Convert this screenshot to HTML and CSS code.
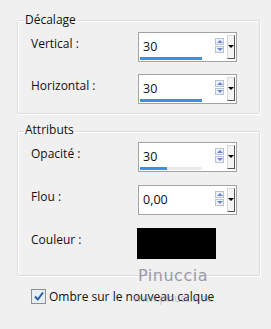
FILE: index.html
```html
<!DOCTYPE html>
<html>
<head>
<meta charset="utf-8">
<link rel="stylesheet" href="styles.css">
</head>
<body>
<div class="dialog">
  <fieldset class="group g1">
    <legend>Décalage</legend>
    <div class="row">
      <span class="label">Vertical :</span>
      <div class="spin">
        <div class="field"><span class="val">30</span><div class="track"><div class="fill" style="width:62px"></div></div></div>
        <div class="arrows"><span class="up"></span><span class="down"></span></div>
        <span class="drop"></span>
      </div>
    </div>
    <div class="row">
      <span class="label">Horizontal :</span>
      <div class="spin">
        <div class="field"><span class="val">30</span><div class="track"><div class="fill" style="width:62px"></div></div></div>
        <div class="arrows"><span class="up"></span><span class="down"></span></div>
        <span class="drop"></span>
      </div>
    </div>
  </fieldset>
  <fieldset class="group g2">
    <legend>Attributs</legend>
    <div class="row">
      <span class="label">Opacité :</span>
      <div class="spin">
        <div class="field"><span class="val">30</span><div class="track"><div class="fill" style="width:27px"></div></div></div>
        <div class="arrows"><span class="up"></span><span class="down"></span></div>
        <span class="drop"></span>
      </div>
    </div>
    <div class="row">
      <span class="label">Flou :</span>
      <div class="spin">
        <div class="field"><span class="val">0,00</span></div>
        <div class="arrows"><span class="up"></span><span class="down"></span></div>
        <span class="drop"></span>
      </div>
    </div>
    <div class="row color-row">
      <span class="label">Couleur :</span>
      <div class="swatch"></div>
    </div>
  </fieldset>
  <label class="check">
    <span class="box"><svg width="12" height="12" viewBox="0 0 12 12"><path d="M2 6.5 L4.8 9.5 L10 2.5" fill="none" stroke="#2a5aa8" stroke-width="2"/></svg></span>
    <span>Ombre sur le nouveau calque</span>
  </label>
  <div class="watermark">
    <span class="wm-big">Pinuccia</span>
    <span class="wm-small">www.pinuccia.eu</span>
  </div>
</div>
</body>
</html>
```

FILE: styles.css
```css
html, body {
  margin: 0;
  padding: 0;
  background: #f0f0f0;
}
body {
  font-family: "Open Sans", "Noto Sans", sans-serif;
  font-size: 12px;
  color: #111;
  width: 271px;
  height: 329px;
  overflow: hidden;
}
.dialog {
  position: relative;
  padding-top: 13px;
}
.group {
  margin: 0 0 0 17px;
  width: 243px;
  box-sizing: border-box;
  border: 1px solid #d8dde2;
  box-shadow: inset 1px 1px 0 #fff, 1px 1px 0 #fff;
  border-radius: 2px;
  padding: 0 0 0 13px;
}
.group legend {
  padding: 0 2px 0 1px;
  margin-left: -7px;
  line-height: 14px;
  height: 14px;
}
.g1 {
  height: 101px;
  padding-top: 5px;
}
.g2 {
  margin-top: 9px;
  height: 153px;
  padding-top: 3px;
}
.g2 legend {
  height: 16px;
  padding-bottom: 2px;
  box-sizing: border-box;
}
.row {
  display: flex;
  align-items: flex-start;
  height: 30px;
  margin-bottom: 12px;
}
.g2 .row { margin-bottom: 13px; }
.label {
  width: 107px;
  padding-top: 4px;
  line-height: 16px;
}
.spin {
  width: 99px;
  height: 30px;
  box-sizing: border-box;
  border: 1px solid #a3a3a3;
  background: #fff;
  display: flex;
  align-items: flex-start;
}
.field {
  position: relative;
  flex: 1;
  height: 28px;
}
.val {
  display: block;
  padding: 6px 0 0 4px;
  line-height: 16px;
  font-size: 12.5px;
}
.track {
  position: absolute;
  left: 1px;
  top: 24px;
  width: 62px;
  height: 3px;
  background: #eaeaea;
}
.fill {
  height: 3px;
  background: #3d8ee6;
}
.arrows {
  display: flex;
  flex-direction: column;
  gap: 1px;
  margin-top: 5px;
  margin-right: 3px;
}
.arrows span {
  width: 9px;
  height: 7px;
  box-sizing: border-box;
  border: 1px solid #b9c3d3;
  background: #eef2f8;
  position: relative;
}
.arrows span::after {
  content: "";
  position: absolute;
  left: 1px;
  top: 1px;
  width: 0;
  height: 0;
  border-left: 3px solid transparent;
  border-right: 3px solid transparent;
}
.arrows .up::after { border-bottom: 3px solid #6b86c8; }
.arrows .down::after { border-top: 3px solid #6b86c8; }
.drop {
  width: 8px;
  height: 24px;
  margin-top: 2px;
  margin-right: 1px;
  box-sizing: border-box;
  border: 1px solid #d8d8d8;
  border-right-color: #555;
  border-bottom-color: #555;
  background: #f4f4f4;
  position: relative;
}
.drop::after {
  content: "";
  position: absolute;
  left: 0px;
  top: 9px;
  border-left: 3px solid transparent;
  border-right: 3px solid transparent;
  border-top: 3px solid #000;
}
.color-row { margin-bottom: 0; height: 31px; }
.color-row .swatch {
  width: 79px;
  height: 31px;
  background: #000;
  margin-left: -1px;
}
.check {
  display: flex;
  align-items: center;
  gap: 3px;
  margin: 12px 0 0 31px;
  height: 16px;
}
.check .box {
  width: 15px;
  height: 15px;
  box-sizing: border-box;
  border: 1px solid #8e8f8f;
  background: #e6eef8;
  display: flex;
  align-items: center;
  justify-content: center;
}
.watermark {
  position: absolute;
  left: 108px;
  top: 266px;
  width: 130px;
  text-align: center;
  pointer-events: none;
}
.wm-big {
  display: block;
  font-family: "DejaVu Sans", sans-serif;
  font-size: 16px;
  color: #9a9aa8;
  line-height: 20px;
  letter-spacing: 0.5px;
}
.wm-small {
  display: block;
  font-size: 10px;
  color: #8080a0;
  opacity: 0.45;
  margin-top: 5px;
}
```
